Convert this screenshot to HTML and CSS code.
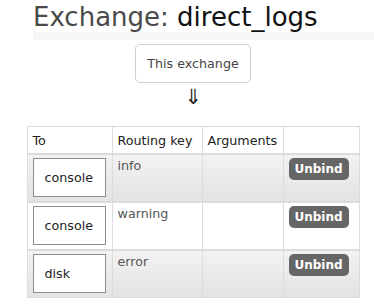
FILE: index.html
```html
<!DOCTYPE html>
<html lang="en">
<head>
  <meta charset="UTF-8">
  <title>Exchange: direct_logs</title>
  <link rel="stylesheet" href="styles.css">
</head>
<body>

<h1 class="page-title">Exchange: <b>direct_logs</b></h1>
<div class="section-bar"></div>

<div class="bindings">
  <div class="bindings-source">This exchange</div>
  <div class="bindings-arrow">&#8659;</div>

  <table class="list">
    <colgroup>
      <col class="col-to">
      <col class="col-key">
      <col class="col-args">
      <col class="col-action">
    </colgroup>
    <thead>
      <tr>
        <th>To</th>
        <th>Routing key</th>
        <th>Arguments</th>
        <th></th>
      </tr>
    </thead>
    <tbody>
      <tr class="alt">
        <td><span class="dest">console</span></td>
        <td>info</td>
        <td></td>
        <td><button class="unbind">Unbind</button></td>
      </tr>
      <tr>
        <td><span class="dest">console</span></td>
        <td>warning</td>
        <td></td>
        <td><button class="unbind">Unbind</button></td>
      </tr>
      <tr class="alt">
        <td><span class="dest">disk</span></td>
        <td>error</td>
        <td></td>
        <td><button class="unbind">Unbind</button></td>
      </tr>
    </tbody>
  </table>
</div>

</body>
</html>
```

FILE: styles.css
```css
body {
  margin: 0;
  font-family: "DejaVu Sans", Verdana, sans-serif;
  font-size: 12.7px;
  color: #555;
  background: #fff;
}

.page-title {
  margin: 0;
  padding: 3px 0 0 33px;
  height: 29px;
  font-size: 26px;
  line-height: 29px;
  font-weight: normal;
  color: #4a4a4a;
  white-space: nowrap;
}

.page-title b {
  font-weight: normal;
  color: #111;
}

.section-bar {
  margin-left: 33px;
  height: 8px;
  background: #f6f6f6;
}

.bindings {
  width: 332px;
  margin: 4px 0 0 27px;
  display: flex;
  flex-direction: column;
  align-items: center;
}

.bindings-source {
  padding: 11px 11px;
  line-height: 15px;
  border: 1px solid #cfcfcf;
  border-radius: 5px;
  color: #444;
}

.bindings-arrow {
  margin-top: 2px;
  font-size: 21px;
  line-height: 24px;
  color: #222;
}

.list {
  margin-top: 17px;
  width: 332px;
  table-layout: fixed;
  border-collapse: collapse;
  border: 1px solid #dcdcdc;
}

.col-to { width: 85px; }
.col-key { width: 90px; }
.col-args { width: 81px; }
.col-action { width: 76px; }

.list th {
  height: 20px;
  padding: 3px 5px;
  text-align: left;
  font-weight: normal;
  color: #222;
  line-height: 15px;
  background: #fff;
  border: 1px solid #dcdcdc;
  border-bottom-width: 2px;
}

.list td {
  height: 40px;
  padding: 3px 5px;
  vertical-align: top;
  line-height: 15px;
  border: 1px solid #dcdcdc;
  border-top-width: 2px;
}

.list tr.alt td {
  background: linear-gradient(#f2f2f2, #e3e3e3);
}

.dest {
  display: block;
  width: 60px;
  height: 37px;
  padding-left: 11px;
  line-height: 37px;
  border: 1px solid #8c8c8c;
  background: #fff;
  color: #222;
}

.unbind {
  display: block;
  width: 60px;
  height: 22px;
  padding: 0;
  border: none;
  border-radius: 5px;
  background: #666;
  color: #fff;
  font-family: "DejaVu Sans", Verdana, sans-serif;
  font-size: 12px;
  font-weight: bold;
  cursor: pointer;
}
```
